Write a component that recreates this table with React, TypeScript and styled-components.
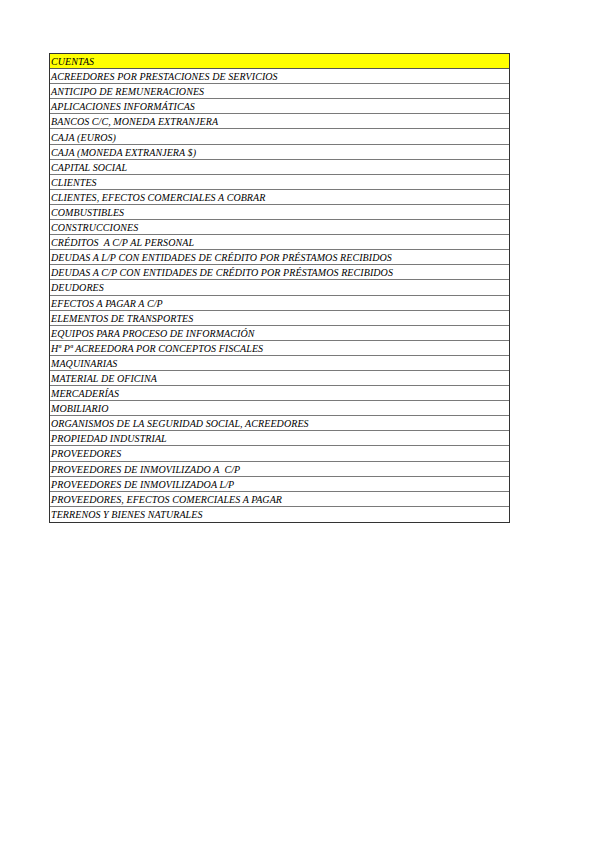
import styled, { createGlobalStyle } from "styled-components";

const GlobalStyle = createGlobalStyle`
  html, body {
    margin: 0;
    padding: 0;
    background: #ffffff;
  }
`;

const Page = styled.div`
  width: 599px;
  height: 848px;
  padding: 53px 0 0 49px;
  box-sizing: border-box;
  background: #ffffff;
`;

const Sheet = styled.div`
  display: flex;
  flex-direction: column;
  width: 461px;
  box-sizing: border-box;
  border: 1.5px solid #333;
`;

const Row = styled.div<{ $header?: boolean }>`
  display: flex;
  align-items: center;
  height: 15.1px;
  box-sizing: border-box;
  padding: 1px 0 0 1px;
  background: ${(p) => (p.$header ? "#ffff00" : "#ffffff")};
  border-bottom: ${(p) => (p.$header ? "1.5px solid #555" : "1.5px solid #7a7a7a")};
  font-family: "Liberation Serif", "Times New Roman", serif;
  font-style: italic;
  font-size: 10px;
  letter-spacing: 0.08px;
  color: #000;
  white-space: pre;
  overflow: hidden;

  &:last-child {
    border-bottom: none;
  }
`;

const cuentas = [
  "ACREEDORES POR PRESTACIONES DE SERVICIOS",
  "ANTICIPO DE REMUNERACIONES",
  "APLICACIONES INFORMÁTICAS",
  "BANCOS C/C, MONEDA EXTRANJERA",
  "CAJA (EUROS)",
  "CAJA (MONEDA EXTRANJERA $)",
  "CAPITAL SOCIAL",
  "CLIENTES",
  "CLIENTES, EFECTOS COMERCIALES A COBRAR",
  "COMBUSTIBLES",
  "CONSTRUCCIONES",
  "CRÉDITOS  A C/P AL PERSONAL",
  "DEUDAS A L/P CON ENTIDADES DE CRÉDITO POR PRÉSTAMOS RECIBIDOS",
  "DEUDAS A C/P CON ENTIDADES DE CRÉDITO POR PRÉSTAMOS RECIBIDOS",
  "DEUDORES",
  "EFECTOS A PAGAR A C/P",
  "ELEMENTOS DE TRANSPORTES",
  "EQUIPOS PARA PROCESO DE INFORMACIÓN",
  "Hª Pª ACREEDORA POR CONCEPTOS FISCALES",
  "MAQUINARIAS",
  "MATERIAL DE OFICINA",
  "MERCADERÍAS",
  "MOBILIARIO",
  "ORGANISMOS DE LA SEGURIDAD SOCIAL, ACREEDORES",
  "PROPIEDAD INDUSTRIAL",
  "PROVEEDORES",
  "PROVEEDORES DE INMOVILIZADO A  C/P",
  "PROVEEDORES DE INMOVILIZADOA L/P",
  "PROVEEDORES, EFECTOS COMERCIALES A PAGAR",
  "TERRENOS Y BIENES NATURALES",
];

const App = () => {
  return (
    <>
      <GlobalStyle />
      <Page>
        <Sheet>
          <Row $header>CUENTAS</Row>
          {cuentas.map((c, i) => (
            <Row key={i}>{c}</Row>
          ))}
        </Sheet>
      </Page>
    </>
  );
};

export default App;
